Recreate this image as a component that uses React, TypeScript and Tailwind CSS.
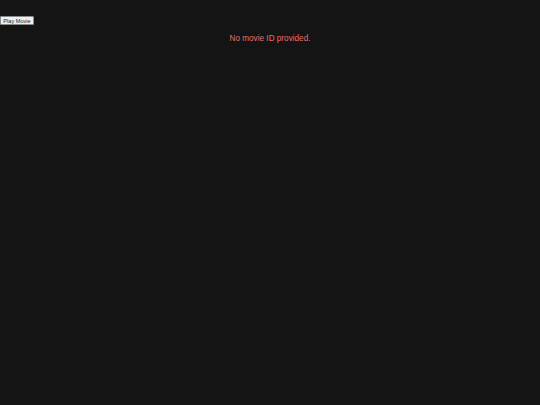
export default function App() {
  return (
    <div className="min-h-[405px] w-full bg-[#141414]" style={{ fontFamily: '"Liberation Sans", Arial, sans-serif' }}>
      <div className="h-[16px]" />
      <div className="flex">
        <button className="h-[9px] w-[34px] px-[2px] bg-[#efefef] border border-[#8a8a8a] rounded-[1px] text-[5.6px] leading-[6px] text-[#222] flex items-center justify-center">
          Play Movie
        </button>
      </div>
      <p className="mt-[9px] text-center text-[8.2px] leading-[10px] text-[#e07070]">No movie ID provided.</p>
    </div>
  );
}
